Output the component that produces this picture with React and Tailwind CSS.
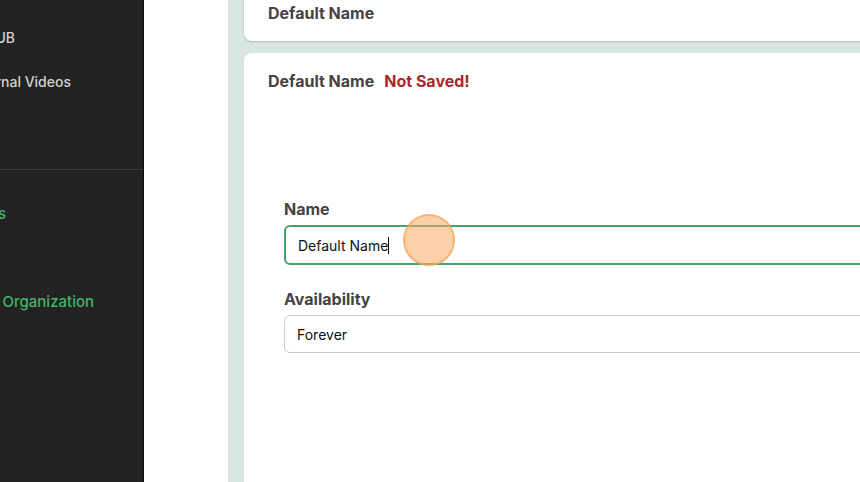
import React from "react";

const font = { fontFamily: "Inter, 'Noto Sans', sans-serif" };

// right edge of each sidebar label, so the cut-off text lines up
const SideItem = ({ label, end, green }) => (
  <div className="h-[44px] flex items-center">
    <div
      className={`flex justify-end whitespace-nowrap font-medium ${
        green ? "text-[15px] text-[#41b46c]" : "text-[14px] text-[#d2d2d2]"
      }`}
      style={{ width: end }}
    >
      <span>{label}</span>
    </div>
  </div>
);

const Sidebar = () => (
  <aside className="w-[144px] shrink-0 bg-[#222222] border-r border-[#0c0c0c] overflow-hidden flex flex-col pt-[15px]">
    <SideItem label="Video HUB" end={15} />
    <SideItem label="Internal Videos" end={71} />
    <div className="h-[66px]" />
    <div className="h-px bg-[#3b3b3b]" />
    <div className="h-[22px]" />
    <SideItem label="Settings" end={6} green />
    <div className="h-[44px]" />
    <SideItem label="My Organization" end={94} green />
  </aside>
);

const Field = ({ label, children }) => (
  <div className="flex flex-col gap-1">
    <label className="text-[16px] leading-6 font-bold text-[#444]">{label}</label>
    {children}
  </div>
);

export default function App() {
  return (
    <div className="h-[482px] w-[860px] flex overflow-hidden bg-white" style={font}>
      <Sidebar />
      <div className="w-[84px] shrink-0 bg-white" />
      <main className="flex-1 bg-[#d9e6e0] pl-4 flex flex-col gap-3 min-w-0">
        <div className="-mt-[15px] -mr-24 bg-white rounded-b-lg shadow-[0_1px_2px_rgba(0,0,0,0.18)] px-6 py-4">
          <h2 className="text-[16px] leading-6 font-bold text-[#444]">Default Name</h2>
        </div>

        <section className="relative flex-1 -mr-24 bg-white rounded-t-lg px-6 pt-4">
          <div className="flex items-center gap-2.5 text-[16px] leading-6 font-bold">
            <span className="text-[#444]">Default Name</span>
            <span className="text-[#a8282b]">Not Saved!</span>
          </div>

          <div className="mt-[104px] pl-4 flex flex-col gap-[22px]">
            <Field label="Name">
              <div className="h-[40px] rounded-md border-2 border-[#45a26f] flex items-center px-3 text-[14px] text-[#111]">
                <span>Default Name</span>
                <span className="w-px h-[17px] bg-black" />
              </div>
            </Field>
            <Field label="Availability">
              <div className="h-[38px] rounded-md border border-[#c9c9c9] flex items-center px-3 text-[14px] text-[#111]">
                Forever
              </div>
            </Field>
          </div>

          {/* click highlight */}
          <div className="absolute left-[159px] top-[161px] w-[52px] h-[52px] rounded-full bg-[rgba(248,170,100,0.55)] border-2 border-[rgba(243,160,85,0.6)]" />
        </section>
      </main>
    </div>
  );
}
